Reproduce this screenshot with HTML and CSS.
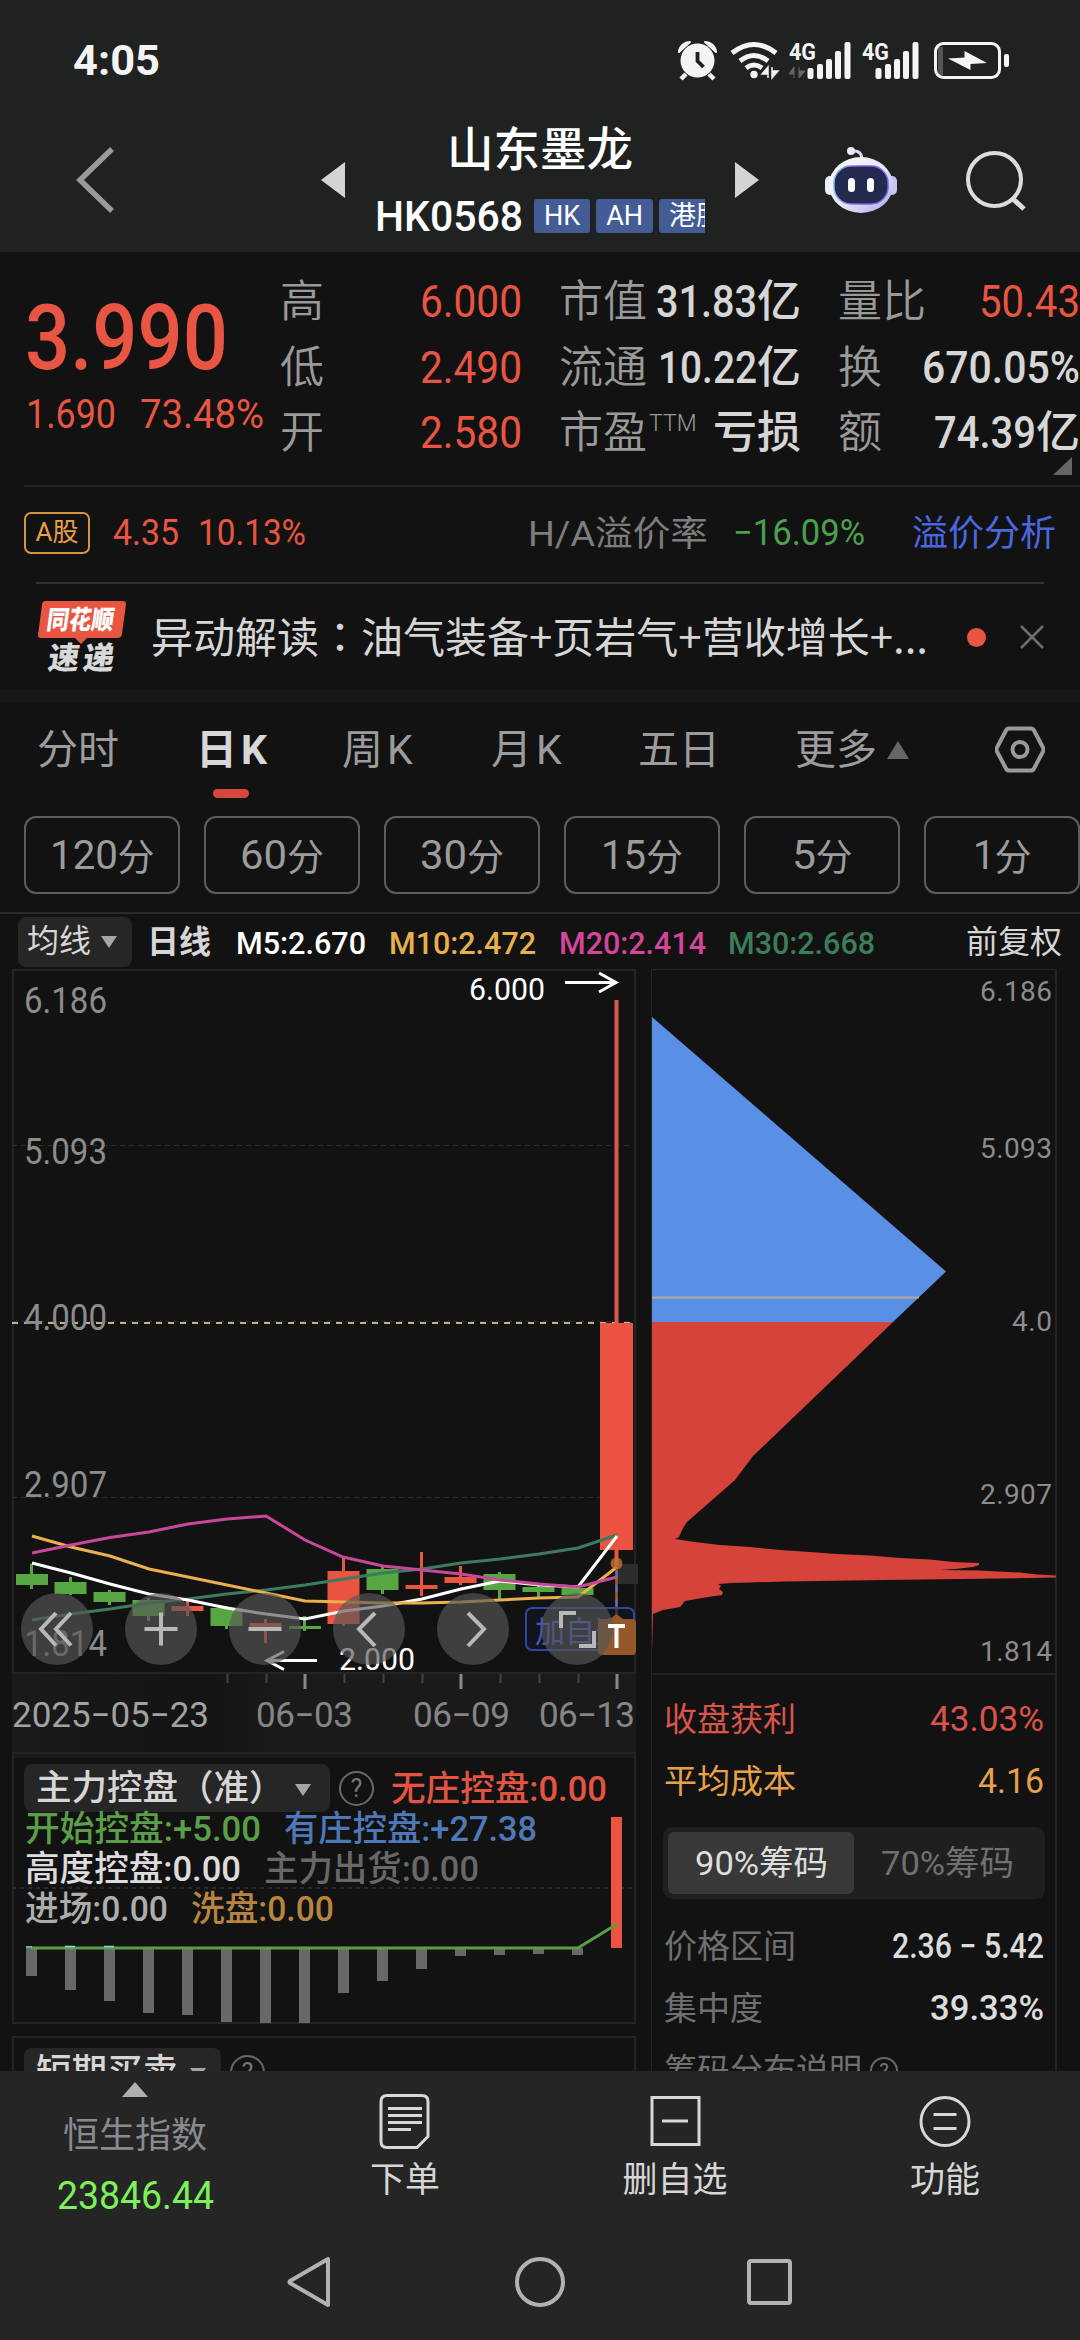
FILE: index.html
```html
<!DOCTYPE html>
<html lang="zh-CN">
<head>
<meta charset="utf-8">
<title>山东墨龙 HK0568</title>
<link rel="stylesheet" href="styles.css">
</head>
<body>
<div class="screen">
  <header class="top">
    <div class="status">
      <span class="clock" data-w="87">4:05</span>
      <svg class="status-icons" width="340" height="50" viewBox="675 34 340 50">
        <g fill="#f4f4f4">
          <circle cx="697.5" cy="59.500" r="17"/>
          <path d="M679 51a11 11 0 0 1 11-10zM716 51a11 11 0 0 0-11-10z" stroke="#f4f4f4" stroke-width="2" stroke-linejoin="round"/>
          <path d="M686 73l-5 5M709 73l5 5" stroke="#f4f4f4" stroke-width="4.500"/>
          <path d="M697.500 51v9l6 6" fill="none" stroke="#1f2221" stroke-width="3.800"/>
          <circle cx="754" cy="73.500" r="3.700"/>
          <path d="M768 77V66l-6 7h6M772 66v11l6-7h-6" stroke="#f4f4f4" stroke-width="1.500"/>
        </g>
        <g fill="none" stroke="#f4f4f4" stroke-width="5">
          <path d="M732 52q22-17 44 0"/><path d="M740 60q14-11 28 0"/><path d="M746 67q8-6 16 0"/>
        </g>
        <g fill="#f4f4f4">
          <text class="net" x="789" y="59" textLength="27" lengthAdjust="spacingAndGlyphs">4G</text>
          <text class="net" x="862" y="59" textLength="27" lengthAdjust="spacingAndGlyphs">4G</text>
          <g id="bars"><rect x="807.500" y="67" width="6" height="11" rx="2"/><rect x="817" y="63" width="6" height="15" rx="2"/><rect x="826" y="58" width="6" height="20" rx="2"/><rect x="835" y="50" width="6" height="28" rx="2"/><rect x="844.500" y="41" width="6" height="37" rx="2"/></g>
          <use href="#bars" x="68"/>
          <rect x="1004" y="53" width="5" height="13" rx="2"/>
          <path d="M964.500 50L987 62l-16.500 1v6L948 57.500l16.500-1z"/>
        </g>
        <path d="M794 77V66l-5 7h5M799 66v11l6-7h-6" fill="#666" stroke="#666"/>
        <rect x="938" y="46" width="5" height="28" fill="#555"/>
        <rect x="935.500" y="42.500" width="64" height="34" rx="8" fill="none" stroke="#f4f4f4" stroke-width="3"/>
      </svg>
    </div>
    <div class="titlebar">
      <svg class="back" width="44" height="70" viewBox="74 145 44 70"><path d="M112 149L80 180l32 31" fill="none" stroke="#9a9a9a" stroke-width="5.500"/></svg>
      <svg class="prev" width="24" height="38" viewBox="0 0 24 38"><path d="M24 1v36L0 19z" fill="#d4d4d4"/></svg>
      <div class="stock">
        <div class="name">山东墨龙</div>
        <div class="code"><span class="hk" data-w="148">HK0568</span><i>HK</i><i>AH</i><i class="cut">港股</i></div>
      </div>
      <svg class="next" width="24" height="38" viewBox="0 0 24 38"><path d="M0 1v36L24 19z" fill="#d4d4d4"/></svg>
      <svg class="robot" width="74" height="70" viewBox="824 142 74 70">
        <defs>
          <linearGradient id="shell" x1="0" y1="0" x2="1" y2="1"><stop offset="0" stop-color="#fff"/><stop offset=".55" stop-color="#e6e3f6"/><stop offset="1" stop-color="#aaa5e6"/></linearGradient>
          <linearGradient id="rim" x1="0" y1="0" x2="1" y2="0"><stop offset="0" stop-color="#7ac0e0"/><stop offset=".5" stop-color="#8a5be0"/><stop offset="1" stop-color="#6a6ae8"/></linearGradient>
        </defs>
        <path d="M852 148q9-1 10 7" fill="none" stroke="#dcdaf0" stroke-width="3"/><circle cx="851" cy="148" r="4" fill="#eceaf8"/>
        <rect x="825" y="173" width="10" height="19" rx="5" fill="#eeedfa"/><rect x="887" y="173" width="10" height="19" rx="5" fill="#c9c5f0"/>
        <ellipse cx="861" cy="182" rx="32" ry="28" fill="url(#shell)"/>
        <rect x="834" y="163" width="54" height="38" rx="17" fill="#232a4e" stroke="url(#rim)" stroke-width="1.500"/>
        <rect x="848" y="175" width="7" height="14" rx="3.500" fill="#fff"/><rect x="867" y="175" width="7" height="14" rx="3.500" fill="#fff"/>
      </svg>
      <svg class="search" width="62" height="62" viewBox="965 148 62 62" fill="none" stroke="#dcdcdc"><circle cx="994.500" cy="178.500" r="26.500" stroke-width="4"/><path d="M1013 198l11 10" stroke-width="5"/></svg>
    </div>
  </header>

  <section class="quote">
    <div class="last">
      <div class="price"><span data-w="203">3.990</span></div>
      <div class="change"><span data-w="90">1.690</span><span data-w="124">73.48%</span></div>
    </div>
    <dl class="facts">
      <div><dt>高</dt><dd class="up"><b data-w="102">6.000</b></dd></div>
      <div><dt>市值</dt><dd><b data-w="101">31.83</b>亿</dd></div>
      <div><dt>量比</dt><dd class="up"><b data-w="101">50.43</b></dd></div>
      <div><dt>低</dt><dd class="up"><b data-w="102">2.490</b></dd></div>
      <div><dt>流通</dt><dd><b data-w="99">10.22</b>亿</dd></div>
      <div><dt>换</dt><dd><b data-w="158">670.05%</b></dd></div>
      <div><dt>开</dt><dd class="up"><b data-w="102">2.580</b></dd></div>
      <div><dt>市盈<sup>TTM</sup></dt><dd>亏损</dd></div>
      <div><dt>额</dt><dd><b data-w="102">74.39</b>亿</dd></div>
    </dl>
    <span class="corner"></span>
  </section>

  <section class="ashare">
    <span class="badge">A股</span>
    <span class="up fig" data-w="66">4.35</span>
    <span class="up fig pct" data-w="108">10.13%</span>
    <span class="lbl" data-w="180">H/A溢价率</span>
    <span class="down fig" data-w="132">−16.09%</span>
    <a data-w="144">溢价分析</a>
  </section>

  <section class="news">
    <svg width="92" height="76" viewBox="35 598 92 76">
      <path d="M45 600h77q3 0 3 3l-4 30q-1 4-4 4H86l-6 6-6-6H40q-3 0-3-3l4-30q0-4 4-4z" fill="#e85642"/>
      <g transform="skewX(-8)"><text class="logo-a" x="133" y="628" textLength="67" lengthAdjust="spacingAndGlyphs">同花顺</text>
      <text class="logo-b" x="140" y="668" textLength="66">速递</text></g>
    </svg>
    <p>异动解读<span class="colon" lang="zh-TW">：</span>油气装备+页岩气+营收增长+...</p>
    <span class="dot"></span>
    <svg class="close" width="24" height="24" viewBox="0 0 24 24"><path d="M1 1l22 22M23 1L1 23" stroke="#6e6e6e" stroke-width="2.500"/></svg>
  </section>

  <nav class="tabs">
    <span>分时</span><span class="on">日<b>K</b></span><span class="k">周<b>K</b></span><span>月<b>K</b></span><span>五日</span><span class="more">更多<i></i></span>
    <svg width="50" height="48" viewBox="995 725 50 48" fill="none" stroke="#9a9a9a"><path d="M1009 728.500h22q2 0 3 2l9 17q1 2 0 4l-9 17q-1 2-3 2h-22q-2 0-3-2l-9-17q-1-2 0-4l9-17q1-2 3-2z" stroke-width="4"/><circle cx="1020" cy="749.500" r="7.500" stroke-width="4"/></svg>
  </nav>
  <div class="pills"><span><b data-w="68">120</b>分</span><span><b data-w="47">60</b>分</span><span><b data-w="47">30</b>分</span><span><b data-w="45">15</b>分</span><span><b data-w="24">5</b>分</span><span><b data-w="22">1</b>分</span></div>

  <div class="ma">
    <span class="sel">均线<i></i></span><b class="day">日线</b>
    <span class="m m5" data-w="130">M5:2.670</span><span class="m m10" data-w="147">M10:2.472</span><span class="m m20" data-w="147">M20:2.414</span><span class="m m30" data-w="147">M30:2.668</span>
    <span class="adj">前复权</span>
  </div>

  <main class="charts">
    <div class="left">
      <svg class="kline" width="626" height="784" viewBox="12 968 626 784">
        <defs><linearGradient id="axis" x1="0" x2="1" y1="0" y2="0"><stop offset="0" stop-color="#1a1a1a"/><stop offset=".3" stop-color="#141414"/><stop offset=".42" stop-color="#1a1a1a"/></linearGradient></defs>
        <rect x="12" y="1674" width="624" height="78" fill="url(#axis)"/>
        <rect x="13" y="970" width="622" height="703" fill="none" stroke="#242424" stroke-width="2"/>
        <g stroke="#2c2c2c" stroke-dasharray="5 4"><path d="M12 1145.500h620M12 1321.500h620M12 1497.500h588"/></g>
        <path d="M12 1323h622" stroke="#c9b182" stroke-width="2" stroke-dasharray="6 6"/>
        <g class="axis-l">
          <text x="24" y="1012.500" textLength="83" lengthAdjust="spacingAndGlyphs">6.186</text>
          <text x="24" y="1163.500" textLength="83" lengthAdjust="spacingAndGlyphs">5.093</text>
          <text x="24" y="1330" textLength="83" lengthAdjust="spacingAndGlyphs">4.000</text>
          <text x="24" y="1497" textLength="83" lengthAdjust="spacingAndGlyphs">2.907</text>
          <text x="24" y="1656" textLength="83" lengthAdjust="spacingAndGlyphs">1.814</text>
        </g>
        <rect x="617" y="1564" width="21" height="20" fill="#2c2c2c"/>
        <g fill="#56a642">
          <path d="M16 1574h32v11H16zM30 1564h3v25h-3z"/><path d="M54.500 1582h32v12h-32zM69 1577h3v18h-3z"/><path d="M93.500 1592h32v10h-32zM108 1590h3v15h-3z"/><path d="M132.500 1600h32v16h-32zM147 1598h3v23h-3z"/><path d="M210.500 1608h32v18h-32zM225 1606h3v23h-3z"/><path d="M289 1626h32v3h-32zM303 1616h3v15h-3z"/><path d="M366.500 1569h32v21h-32zM381 1567h3v27h-3z"/><path d="M483.500 1574h32v16h-32zM498 1572h3v27h-3z"/><path d="M522.500 1587h32v5h-32zM537 1585h3v12h-3z"/><path d="M561.500 1588h32v7h-32z"/>
        </g>
        <g fill="#ea5441">
          <path d="M171.500 1606h32v5h-32zM186 1600h3v16h-3z"/><path d="M249.500 1623h32v4h-32zM264 1619h3v24h-3z"/><path d="M327.500 1571h32v53h-32zM342 1558h3v68h-3z"/><path d="M405.500 1585h32v4h-32zM420 1552h3v44h-3z"/><path d="M444.500 1577h32v6h-32zM459 1566h3v19h-3z"/><path d="M600 1323h33v227h-33zM614.500 1550h4v16h-4z"/><path d="M614.500 1000h4v323h-4z" fill="#d65b4b"/>
        </g>
        <g fill="none" stroke-width="3">
          <path stroke="#3e7a5f" d="M32 1620L71 1614 110 1609 149 1603 188 1599 227 1594 266 1590 305 1585 344 1579 383 1573 422 1569 461 1563 500 1559 539 1554 578 1548 617 1535"/>
          <path stroke="#fff" d="M32 1563L71 1573 110 1584 149 1594 188 1600 227 1608 266 1614 305 1619 344 1611 383 1606 422 1599 461 1589 500 1581 539 1585 578 1587 617 1536"/>
          <path stroke="#eab04e" d="M32 1536L71 1547 110 1556 149 1569 188 1577 227 1585 266 1593 305 1601 344 1602 383 1603 422 1603 461 1602 500 1600 539 1598 578 1597 617 1567"/>
          <path stroke="#c8479a" d="M32 1553L71 1545 110 1537.500 149 1532 188 1524 227 1519 266 1516 305 1540 343 1557 383 1566 422 1570 461 1574 500 1580 539 1584 578 1587 617 1577"/>
        </g>
        <circle cx="616.500" cy="1563.500" r="6" fill="#c07030" fill-opacity=".8"/>
        <path d="M616.500 1570v46" stroke="#a0622c" stroke-width="2.500"/><path d="M616.500 1571v46" stroke="#5a6fd0" stroke-width="2" stroke-dasharray="7 7"/>
        <g class="hi">
          <text x="469" y="1000" textLength="76" lengthAdjust="spacingAndGlyphs">6.000</text><path d="M565 982.500h50M599 973l17 9.500-17 9.500"/>
          <text x="339" y="1670" textLength="76" lengthAdjust="spacingAndGlyphs">2.000</text><path d="M317 1660.500h-49M284 1651.500l-17 9 17 9"/>
        </g>
        <rect x="526" y="1608" width="108" height="42" rx="6" fill="#121524" fill-opacity=".6" stroke="#2f48a0" stroke-width="2"/>
        <text class="addsel" x="535" y="1642" textLength="90">加自选</text>
        <path d="M602 1619h8l6.500-5 6.500 5h9q4 0 4 4v28q0 4-4 4h-30q-4 0-4-4v-28q0-4 4-4z" fill="#96582a"/>
        <g fill="#575757" fill-opacity=".66"><circle cx="57" cy="1629" r="36"/><circle cx="161" cy="1629" r="36"/><circle cx="265" cy="1629" r="36"/><circle cx="369" cy="1629" r="36"/><circle cx="473" cy="1629" r="36"/><circle cx="577" cy="1629" r="36"/></g>
        <g fill="none" stroke="#b8b8b8" stroke-width="4">
          <path d="M56 1613l-15 16 15 16.500M71 1613l-15 16 15 16.500"/><path d="M144.500 1629h33M161 1612.500v33"/><path d="M248.500 1629h33"/><path d="M375 1613l-16 16 16 17"/><path d="M468 1613l16 16-16 17"/><path d="M576 1613h-15v15M579 1646h15v-15"/>
        </g>
        <path d="M608 1626h17M616.500 1626v22" stroke="#fff" stroke-width="4"/>
        <path d="M227.500 1674v9M266.500 1674v9M344.500 1674v9M383.500 1674v9M422.500 1674v9M500.500 1674v9M539.500 1674v9M578.500 1674v9" stroke="#444" stroke-width="2"/>
        <path d="M305 1674v15M461 1674v15M617 1674v15" stroke="#8a8a8a" stroke-width="3"/>
        <g class="dates">
          <text x="12" y="1727" textLength="197" fill="#a2a2a2">2025−05−23</text>
          <text x="256" y="1727" textLength="97">06−03</text><text x="413" y="1727" textLength="97">06−09</text><text x="539" y="1727" textLength="96">06−13</text>
        </g>
      </svg>
      <div class="panel">
        <svg class="bars" width="624" height="272" viewBox="12 1752 624 272">
          <path d="M12 1888h620" stroke="#2a2a2a" stroke-width="2" stroke-dasharray="4 4"/>
          <path fill="#686868" d="M26 1948h11v28H26zM65 1948h11v42H65zM104 1948h11v53h-11zM143 1948h11v65h-11zM182 1948h11v67h-11zM221 1948h11v74h-11zM260 1948h11v75h-11zM299 1948h11v75h-11zM338 1948h11v45h-11zM377 1948h11v33h-11zM416 1948h11v21h-11zM455 1948h11v8h-11zM494 1948h11v7h-11zM533 1948h11v6h-11zM572 1948h11v7h-11z"/>
          <path fill="#ea5441" d="M611 1817h11v131h-11z"/>
          <path fill="none" stroke="#5b9e48" stroke-width="3" d="M31 1948H578L617 1924"/><path d="M26 1947h6M65 1946.500h10M104 1946.500h10" stroke="#7fe0e0" stroke-width="1.500"/>
        </svg>
        <div class="ind">
          <div class="irow first"><span class="pick">主力控盘（准）<i></i></span><span class="q">?</span><span class="c-red" data-w="216">无庄控盘:0.00</span></div>
          <div class="irow"><span class="c-green" data-w="236">开始控盘:+5.00</span><span class="c-blue" data-w="253">有庄控盘:+27.38</span></div>
          <div class="irow"><span class="c-white" data-w="216">高度控盘:0.00</span><span class="c-gray" data-w="215">主力出货:0.00</span></div>
          <div class="irow"><span class="c-light" data-w="143">进场:0.00</span><span class="c-gold" data-w="143">洗盘:0.00</span></div>
        </div>
      </div>
      <div class="panel second"><div class="irow first"><span class="pick">短期买卖<i></i></span><span class="q">?</span></div></div>
    </div>

    <div class="right">
      <svg class="chips" width="404" height="703" viewBox="652 969 404 703">
        <path fill="#5a8fe6" d="M652 1016L946 1270.500 893 1321H652z"/>
        <path d="M652 1296.500h267" stroke="#b5ac8c" stroke-width="2"/>
        <path fill="#d5433a" d="M652 1321H893L753 1455 735 1479 687 1521 683 1527 679 1536 675 1538 695 1541 720 1544 750 1546 780 1549 810 1551 837 1553 870 1554.500 900 1557 930 1558.500 953 1561 979 1562V1564L973 1566 955 1568 940 1569 979 1569.500 1020 1571.500 1037 1573.500 1056 1574.500V1576.500L996 1577.500 885 1579 785 1580.500 732 1582 718 1583 721 1585 719 1588 723 1591 722 1594 705 1596.500 685 1600 680 1606 663 1609 653 1613 652 1650z"/>
        <g class="axis-r" text-anchor="end">
          <text x="1052" y="1000" textLength="72">6.186</text><text x="1052" y="1157" textLength="72">5.093</text><text x="1052" y="1330" textLength="40">4.0</text><text x="1052" y="1503" textLength="72">2.907</text><text x="1052" y="1660" textLength="72">1.814</text>
        </g>
      </svg>
      <div class="stats">
        <div class="srow r1"><span>收盘获利</span><span data-w="114">43.03%</span></div>
        <div class="srow r2"><span>平均成本</span><span data-w="66">4.16</span></div>
        <div class="seg"><span class="on"><b data-w="133">90%筹码</b></span><span><b data-w="133">70%筹码</b></span></div>
        <div class="srow r3"><span>价格区间</span><em data-w="152">2.36 − 5.42</em></div>
        <div class="srow r4"><span>集中度</span><em data-w="114">39.33%</em></div>
        <div class="srow r5"><span>筹码分布说明</span><span class="q small">?</span></div>
      </div>
    </div>
  </main>

  <footer class="bottom">
    <div class="index"><i></i><span class="iname">恒生指数</span><span class="ival" data-w="157">23846.44</span></div>
    <div class="act"><svg width="54" height="58" viewBox="378 2092 54 58" fill="none" stroke="#d8d8d8" stroke-width="3"><path d="M387 2095.500h35q6 0 6 6v35l-11 11h-30q-6 0-6-6v-40q0-6 6-6z"/><path d="M388 2108.500h34M388 2115.500h34M388 2122.500h34M388 2129.500h23"/></svg><span>下单</span></div>
    <div class="act"><svg width="54" height="58" viewBox="647 2092 54 58" fill="none" stroke="#d8d8d8" stroke-width="3"><path d="M651 2097.500h47v47h-47zM661 2121h26"/></svg><span>删自选</span></div>
    <div class="act"><svg width="54" height="58" viewBox="917.500 2092 54 58" fill="none" stroke="#d8d8d8" stroke-width="3"><circle cx="944.500" cy="2121.500" r="24"/><path d="M933 2114.500h23M933 2128.500h23"/></svg><span>功能</span></div>
  </footer>
  <div class="sysnav">
    <svg width="510" height="56" viewBox="284 2254 510 56" fill="none" stroke="#b2b2b2" stroke-width="4" stroke-linejoin="round"><path d="M328 2259v46L290 2283q-1-1 0-2z"/><circle cx="540" cy="2282" r="23"/><rect x="749" y="2261" width="41" height="42" rx="2"/></svg>
  </div>
</div>
<script src="fit.js"></script>
</body>
</html>
```
FILE: styles.css
```css
* { box-sizing: border-box; margin: 0; padding: 0; }
body { background: #121212; }
i, em { font-style: normal; }
b { font-weight: inherit; }
svg { display: block; flex: none; }
.screen {
  width: 1080px; height: 2340px; overflow: hidden;
  display: flex; flex-direction: column;
  background: #121212; color: #d6d6d6;
  font-family: Roboto, "Noto Sans CJK SC", sans-serif;
  white-space: nowrap;
}
[data-w] { display: inline-block; transform-origin: 0 50%; flex: none; }
.up { color: #e85542; }
.down { color: #4aa04e; }

/* header */
.top { height: 252px; flex: none; background: #1f2221; }
.status { height: 120px; display: flex; align-items: center; justify-content: space-between; padding: 0 65px 0 73px; }
.clock { font-size: 43px; font-weight: 700; color: #f4f4f4; }
.net { font: 700 24px Roboto, sans-serif; }
.titlebar { height: 132px; display: flex; align-items: center; padding: 0 53px 12px 74px; }
.prev { margin-left: 203px; }
.stock { width: 360px; margin: 0 15px; display: flex; flex-direction: column; align-items: center; padding-top: 5px; }
.name { font-size: 46.500px; line-height: 62px; font-weight: 500; color: #fff; }
.code { width: 330px; overflow: hidden; display: flex; align-items: center; gap: 6px; height: 60px; margin-top: 5px; }
.hk { font-size: 43px; font-weight: 500; color: #fff; }
.code .hk + i { margin-left: 5px; }
.code i { height: 34px; line-height: 34px; padding: 0 10px; background: #435c95; color: #fff; font-size: 27px; border-radius: 3px; flex: none; }
.robot { margin-left: 65px; }
.search { margin-left: 67px; }

/* quote */
.quote { height: 233px; flex: none; display: flex; position: relative; }
.last { width: 280px; padding: 37px 0 0 25px; flex: none; color: #e85542; }
.price { font-size: 90px; line-height: 100px; font-weight: 500; }
.change { font-size: 41px; line-height: 50px; display: flex; gap: 24px; padding-left: 1px; }
.facts { display: grid; grid-template-columns: 242px 242px 242px; column-gap: 37px; grid-auto-rows: 65.5px; padding-top: 18px; }
.facts div { display: flex; justify-content: space-between; align-items: center; }
.facts dt { font-size: 44px; line-height: 65px; color: #9a9a9a; font-weight: 350; display: flex; }
.facts dd { font-size: 44px; line-height: 65px; font-weight: 500; display: flex; }
.facts dd.up { font-weight: 400; }
.facts sup { font-size: 23px; line-height: 46px; padding-left: 2px; }
.corner { position: absolute; right: 8px; bottom: 10px; border-left: 19px solid transparent; border-bottom: 18px solid #666; }

.ashare { height: 97px; flex: none; margin-left: 24px; border-top: 2px solid #232323; display: flex; align-items: center; padding-right: 24px; padding-bottom: 4px; }
.badge { width: 66px; height: 42px; border: 2px solid #d8933f; border-radius: 7px; color: #e8a044; font-size: 26px; line-height: 36px; text-align: center; }
.fig { font-size: 36px; }
.badge + .fig { margin-left: 23px; }
.pct { margin-left: 19px; }
.lbl { font-size: 35px; color: #7d7d7d; margin-left: auto; padding-bottom: 5px; }
.down.fig { margin-left: 25px; }
.ashare a { font-size: 36px; color: #4a67e0; margin-left: 47px; padding-bottom: 5px; }

.news { height: 108px; flex: none; margin: 0 36px; border-top: 2px solid #303030; display: flex; align-items: center; }
.news p { font-size: 42px; margin-left: 23px; width: 780px; font-family: "Noto Sans CJK SC", sans-serif; line-height: 56px; padding-bottom: 4px; }
.colon { font-family: "Noto Sans CJK TC", sans-serif; }
.dot { width: 19px; height: 19px; border-radius: 50%; background: #ea5441; margin-left: 36px; flex: none; }
.close { margin-left: auto; }

/* period tabs */
.tabs { height: 126px; flex: none; border-top: 12px solid #171717; display: grid; grid-template-columns: 159px 146px 149px 147px 157px 200px 50px; padding-left: 37px; font-size: 41px; line-height: 97px; color: #9c9c9c; }
.tabs b { margin-left: 4px; }
.tabs .on { position: relative; color: #d8d8d8; font-weight: 700; }
.tabs .on::after { content: ""; position: absolute; left: 17px; top: 87px; width: 36px; height: 9px; border-radius: 5px; background: #d8463d; }
.more i { display: inline-block; border: 11px solid transparent; border-top: 0; border-bottom: 18px solid #666; margin-left: 10px; vertical-align: 5px; }
.tabs svg { margin-top: 23px; }
.pills { height: 98px; flex: none; display: flex; gap: 24px; padding-left: 24px; border-bottom: 2px solid #2a2a2a; }
.pills span { width: 156px; height: 78px; flex: none; border: 2px solid #5e5e5e; border-radius: 12px; display: flex; justify-content: center; align-items: center; color: #9c9c9c; font-size: 37px; }
.pills span b { font-size: 41px; }

.ma { height: 54px; flex: none; display: flex; align-items: center; padding: 2px 18px 0 18px; font-size: 32px; }
.sel { width: 114px; height: 50px; background: #262626; border-radius: 8px; line-height: 48px; padding-left: 9px; }
.sel i, .pick i { display: inline-block; border: 8.500px solid transparent; border-bottom: 0; border-top: 12px solid #a6a6a6; margin-left: 10px; vertical-align: 4px; }
.day { margin-left: 15px; font-weight: 700; line-height: 48px; }
.m { font-weight: 500; padding-top: 2px; }
.m5 { margin-left: 25px; color: #fff; }
.m10 { margin-left: 23px; color: #e8b04c; }
.m20 { margin-left: 23px; color: #d4459c; }
.m30 { margin-left: 22px; color: #3c7d5c; }
.adj { margin-left: auto; line-height: 48px; }

/* charts */
.charts { height: 1103px; flex: none; display: flex; padding-left: 12px; overflow: hidden; }
.left { width: 639px; flex: none; display: flex; flex-direction: column; }
svg text { font-family: Roboto, sans-serif; }
.axis-l text { font-size: 36px; fill: #8c8c8c; }
.hi text { font-size: 32px; fill: #fff; }
.hi path { fill: none; stroke: #fff; stroke-width: 3; }
svg .addsel { font: 400 30px "Noto Sans CJK SC", sans-serif; fill: #3f59c4; }
.dates text { font-size: 35px; fill: #858585; }
.dates text[fill] { fill: #a2a2a2; }
.axis-r text { font-size: 28px; fill: #8c8c8c; }
svg .logo-a { font: 900 26px "Noto Sans CJK SC", sans-serif; fill: #fff; }
svg .logo-b { font: 900 31px "Noto Sans CJK SC", sans-serif; fill: #d8d8d8; }

.panel { width: 624px; height: 272px; position: relative; border: 2px solid #242424; flex: none; }
.panel .bars { position: absolute; left: -2px; top: -2px; }
.ind { position: relative; padding: 6px 0 0 11px; border-top: 4px solid #1a1a1a; font-size: 35px; }
.irow { height: 40px; display: flex; align-items: center; gap: 23px; font-weight: 500; }
.irow.first { height: 48px; gap: 0; margin-left: -1px; }
.ind .irow.first + .irow { margin-top: -7px; }
.irow .c-red { padding-bottom: 6px; }
.pick { height: 48px; background: #262626; border-radius: 8px; padding: 0 15px 0 12px; line-height: 49px; font-size: 35.500px; }
.ind .pick { width: 306px; }
.ind .pick i { margin-left: 10px; }
.q { width: 35px; height: 35px; border: 2.500px solid #686868; border-radius: 50%; text-align: center; font-size: 25px; line-height: 31px; color: #777; margin: 0 17px 0 9px; font-weight: 400; flex: none; }
.c-red { color: #e35443; } .c-green { color: #5b9e48; } .c-blue { color: #4f78b8; } .c-white { color: #dcdcdc; }
.c-gray { color: #686868; } .c-light { color: #adadad; } .c-gold { color: #b78540; }
.second { margin-top: 12px; height: 60px; padding: 10px 0 0 11px; }
.second .pick i { margin-left: 12px; }

.right { width: 406px; border: 1px solid #242424; border-width: 1px 2px 0 1px; margin-top: 1px; }
.stats { border-top: 2px solid #222; padding: 14px 11px 0 12px; font-size: 33px; }
.srow { height: 62px; display: flex; align-items: center; justify-content: space-between; color: #707070; line-height: 62px; }
.srow [data-w] { font-size: 35px; }
.srow em { color: #dcdcdc; font-weight: 500; }
.r1 { color: #d9544a; } .r2 { color: #e8a04a; }
.seg { height: 72px; background: #1f1f1f; border-radius: 9px; margin: 14px -1px 17px -1px; padding: 5px; display: flex; font-size: 34px; color: #707070; }
.seg span { flex: 1; display: flex; justify-content: center; align-items: center; border-radius: 6px; padding-bottom: 6px; }
.seg .on { background: #383838; color: #dedede; }
.srow.r5 { justify-content: flex-start; }
.q.small { width: 28px; height: 28px; line-height: 24px; font-size: 20px; margin: 0 0 0 8px; }

/* bottom bars */
.bottom { height: 149px; flex: none; background: #252525; display: grid; grid-template-columns: repeat(4, 270px); }
.index, .act { display: flex; flex-direction: column; align-items: center; }
.index i { border: 13px solid transparent; border-top: 0; border-bottom: 15px solid #b0b0b0; margin-top: 11px; }
.iname { font-size: 36px; line-height: 50px; color: #878b90; margin-top: 14px; }
.ival { font-size: 38px; line-height: 50px; color: #7ef05c; margin-top: 10px; }
.act { padding-top: 21px; font-size: 35px; line-height: 50px; }
.act span { margin-top: 6px; }
.sysnav { flex: 1; background: #252525; padding: 34px 0 0 284px; }
```
FILE: fit.js
```js
document.fonts.ready.then(function () {
  document.querySelectorAll('[data-w]').forEach(function (el) {
    var want = parseFloat(el.dataset.w);
    var natural = el.getBoundingClientRect().width;
    var style = getComputedStyle(el);
    el.style.marginRight = (parseFloat(style.marginRight) + want - natural) + 'px';
    el.style.transform = 'scaleX(' + want / natural + ')';
  });
});
```
